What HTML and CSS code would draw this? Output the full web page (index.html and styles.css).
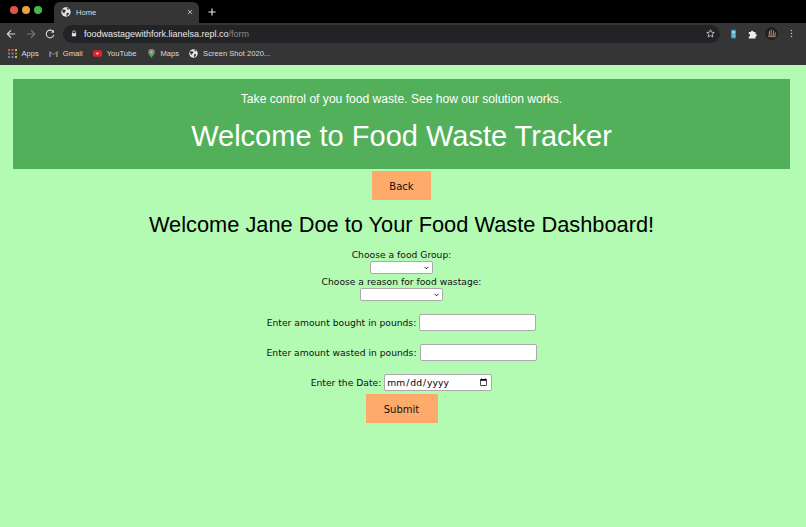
FILE: index.html
```html
<!DOCTYPE html>
<html lang="en">
<head>
  <meta charset="UTF-8" />
  <title>Home</title>
  <link rel="stylesheet" href="styles.css">
</head>
<body>
  <div class="chrome">
    <div class="tabstrip">
      <div class="lights">
        <span class="light red"></span>
        <span class="light yellow"></span>
        <span class="light green"></span>
      </div>
      <div class="tab">
        <svg class="globe" viewBox="0 0 16 16"><circle cx="8" cy="8" r="7.5" fill="#e8e8e8"/><path d="M3 3.500l4 1 1 2-2 1.500-1 3-2-2.500-1.500-2zM9.500 9l3.500.5-1.500 3.500-2.500 1.500-.5-3zM9 1.500l3 .5 1 2-2.500.5z" fill="#3a3a3a"/></svg>
        <span class="tab-title">Home</span>
        <svg class="tab-close" viewBox="0 0 10 10"><path d="M1.500 1.500l7 7M8.500 1.500l-7 7" stroke="#d8d8d8" stroke-width="1.300"/></svg>
      </div>
      <svg class="new-tab" viewBox="0 0 10 10"><path d="M5 .5v9M.5 5h9" stroke="#e8e8e8" stroke-width="1.400"/></svg>
    </div>

    <div class="toolbar">
      <svg class="nav" viewBox="0 0 12 12"><path d="M11 6H2M6 1.500L1.500 6 6 10.500" fill="none" stroke="#d6d6d6" stroke-width="1.300"/></svg>
      <svg class="nav" viewBox="0 0 12 12"><path d="M1 6h9M6 1.500L10.500 6 6 10.500" fill="none" stroke="#777" stroke-width="1.300"/></svg>
      <svg class="nav" viewBox="0 0 12 12"><path d="M10 3.500A4.600 4.600 0 1 0 10.600 7" fill="none" stroke="#d6d6d6" stroke-width="1.300"/><path d="M10.800.8v3.600H7.200z" fill="#d6d6d6"/></svg>
      <div class="omnibox">
        <svg class="lock" viewBox="0 0 8 10"><path d="M2 4.500V3a2 2 0 0 1 4 0v1.500" fill="none" stroke="#e0e0e0"/><rect x="1" y="4.500" width="6" height="4.500" fill="#e0e0e0"/></svg>
        <span class="url">foodwastagewithfork.lianelsa.repl.co<span class="url-path">/form</span></span>
        <svg class="star" viewBox="0 0 12 12"><path d="M6 1l1.500 3.300 3.500.4-2.600 2.400.7 3.500L6 8.800l-3.100 1.800.7-3.500L1 4.700l3.500-.4z" fill="none" stroke="#d6d6d6" stroke-width="1.100"/></svg>
      </div>
      <div class="ext-icons">
        <svg class="ext-note" viewBox="0 0 6 11"><rect width="6" height="11" rx="1" fill="#2f8fa8"/><rect x="1" y="2" width="4" height="3" fill="#9fdcec"/><rect x="1" y="6" width="4" height="3.500" fill="#6cc0d6"/></svg>
        <svg class="ext-puzzle" viewBox="0 0 12 12"><path d="M1 3.500h2.500a1.500 1.500 0 0 1 3 0H9V6a1.500 1.500 0 0 1 0 3v2.500H1V9a1.500 1.500 0 0 0 0-3z" fill="#ececec"/></svg>
        <svg class="avatar" viewBox="0 0 13 13"><circle cx="6.500" cy="6.500" r="6.500" fill="#241e1c"/><path d="M4 10l.5-6M6 10l.2-7.500M8 10l.6-6.500M9.800 9.500l.6-4" stroke="#a8948a" stroke-width="1"/><path d="M3.500 9.500h7" stroke="#8a7468" stroke-width="1.500"/></svg>
        <svg class="menu-dots" viewBox="0 0 4 12"><circle cx="2" cy="2" r="1" fill="#ccc"/><circle cx="2" cy="6" r="1" fill="#ccc"/><circle cx="2" cy="10" r="1" fill="#ccc"/></svg>
      </div>
    </div>

    <div class="bookmarks">
      <span class="bookmark">
        <svg class="bm-icon" viewBox="0 0 9 9">
          <g fill="#e25b4a"><rect width="2" height="2"/><rect x="3.500" width="2" height="2"/></g><rect x="7" width="2" height="2" fill="#e9b13c"/>
          <g fill="#4fa05a"><rect y="3.500" width="2" height="2"/><rect x="7" y="3.500" width="2" height="2"/></g><rect x="3.500" y="3.500" width="2" height="2" fill="#e25b4a"/>
          <g fill="#4f86d9"><rect y="7" width="2" height="2"/><rect x="3.500" y="7" width="2" height="2"/></g><rect x="7" y="7" width="2" height="2" fill="#e9b13c"/>
        </svg>
        Apps
      </span>
      <span class="bookmark">
        <svg class="bm-icon" viewBox="0 0 10 8"><path d="M.5 8V1l4.500 3.500L9.500 1v7H8V3.500L5 5.800 2 3.500V8z" fill="#e0574a"/><path d="M.5 1v7H2V3.500z" fill="#5b8fd9"/><path d="M9.500 1v7H8V3.500z" fill="#57a565"/></svg>
        Gmail
      </span>
      <span class="bookmark">
        <svg class="bm-icon" viewBox="0 0 10 7"><rect width="10" height="7" rx="1.600" fill="#e0202a"/><path d="M4 2v3l2.600-1.500z" fill="#fff"/></svg>
        YouTube
      </span>
      <span class="bookmark">
        <svg class="bm-icon" viewBox="0 0 8 11"><path d="M4 0a4 4 0 0 1 4 4c0 2.500-2.500 4-4 7-1.500-3-4-4.500-4-7a4 4 0 0 1 4-4z" fill="#58a765"/><path d="M1 1.300A4 4 0 0 1 4 0l1 2.500L1.500 5.500z" fill="#5b8fd9"/><path d="M4 0a4 4 0 0 1 3.700 2.500L5 3z" fill="#e0574a"/><circle cx="4" cy="4" r="1.300" fill="#f2c94c"/></svg>
        Maps
      </span>
      <span class="bookmark">
        <svg class="bm-icon" viewBox="0 0 16 16"><circle cx="8" cy="8" r="7.500" fill="#e8e8e8"/><path d="M3 3.500l4 1 1 2-2 1.500-1 3-2-2.500-1.500-2zM9.500 9l3.500.5-1.500 3.500-2.500 1.500-.5-3zM9 1.500l3 .5 1 2-2.500.5z" fill="#3a3a3a"/></svg>
        Screen Shot 2020...
      </span>
    </div>
  </div>

  <div class="page">
    <header class="banner">
      <p class="tagline">Take control of you food waste. See how our solution works.</p>
      <h1>Welcome to Food Waste Tracker</h1>
    </header>

    <button class="action back-btn">Back</button>

    <h2>Welcome Jane Doe to Your Food Waste Dashboard!</h2>

    <form class="waste-form">
      <label for="group">Choose a food Group:</label>
      <select id="group" class="group-select"><option></option></select>
      <label for="reason">Choose a reason for food wastage:</label>
      <select id="reason" class="reason-select"><option></option></select>

      <div class="field first-field">
        <label for="bought">Enter amount bought in pounds:</label>
        <input id="bought" type="text">
      </div>
      <div class="field">
        <label for="wasted">Enter amount wasted in pounds:</label>
        <input id="wasted" type="text">
      </div>
      <div class="field">
        <label for="date">Enter the Date:</label>
        <input id="date" type="date">
      </div>
      <button type="button" class="action submit-btn">Submit</button>
    </form>
  </div>
</body>
</html>
```

FILE: styles.css
```css
* {
  box-sizing: border-box;
}
html, body {
  height: 100%;
}
body {
  margin: 0;
  display: flex;
  flex-direction: column;
  overflow: hidden;
  background-color: #b3fab3;
  font-family: "DejaVu Sans", sans-serif;
}

/* browser frame */
.chrome {
  flex: none;
  font-family: "Liberation Sans", Arial, sans-serif;
  color: #d8d8d8;
}
.tabstrip {
  height: 23px;
  display: flex;
  align-items: flex-end;
  background: #000;
}
.lights {
  display: flex;
  gap: 4px;
  padding: 0 0 9px 10px;
  width: 54px;
}
.light {
  width: 8px;
  height: 8px;
  border-radius: 50%;
}
.red { background: #e5534b; }
.yellow { background: #e0a63c; }
.green { background: #3fb950; }
.tab {
  width: 145px;
  height: 21px;
  display: flex;
  align-items: center;
  padding: 0 6px 1px 7px;
  background: #353535;
  border-radius: 6px 6px 0 0;
  font-size: 7.600px;
}
.globe {
  width: 10px;
  height: 10px;
  margin-right: 5px;
}
.tab-title {
  flex: 1;
  color: #dcdcdc;
}
.tab-close {
  width: 6px;
  height: 6px;
}
.new-tab {
  width: 8px;
  height: 8px;
  margin: 0 0 7px 9px;
}
.toolbar {
  height: 21px;
  display: flex;
  align-items: center;
  padding-left: 6px;
  background: #353535;
}
.nav {
  width: 10px;
  height: 10px;
  margin-right: 9.500px;
}
.nav:nth-child(3) {
  margin-right: 8px;
}
.omnibox {
  width: 657px;
  height: 18px;
  display: flex;
  align-items: center;
  padding: 0 5px 0 8px;
  background: #222326;
  border-radius: 9px;
  font-size: 9px;
}
.lock {
  width: 6px;
  height: 7px;
  margin-right: 7px;
}
.url {
  flex: 1;
  color: #e8e8e8;
}
.url-path {
  color: #8a8a8a;
}
.star {
  width: 9px;
  height: 9px;
}
.ext-icons {
  display: flex;
  align-items: center;
  margin-left: 11px;
}
.ext-note {
  width: 5px;
  height: 10px;
  margin-right: 12px;
}
.ext-puzzle {
  width: 10px;
  height: 10px;
  margin-right: 7px;
}
.avatar {
  width: 13px;
  height: 13px;
  margin-right: 12px;
}
.menu-dots {
  width: 3px;
  height: 9px;
}
.bookmarks {
  height: 21px;
  display: flex;
  align-items: center;
  padding: 0 0 3px 7.500px;
  background: #353535;
  font-size: 7.600px;
}
.bookmark {
  display: flex;
  align-items: center;
  margin-right: 10px;
  color: #dcdcdc;
}
.bm-icon {
  width: 9px;
  height: 9px;
  margin-right: 5px;
}

/* page */
.page {
  flex: 1;
  display: flex;
  flex-direction: column;
  align-items: center;
  padding: 14px 16px 0 13px;
  background-color: #b3fab3;
}
.banner {
  align-self: stretch;
  height: 90px;
  padding-top: 13px;
  background-color: #52b05a;
  color: #fff;
  text-align: center;
  font-family: "Liberation Sans", Arial, sans-serif;
}
.tagline {
  margin: 0;
  font-size: 12.100px;
  line-height: 14px;
}
.banner h1 {
  margin: 12px 0 0;
  font-size: 29px;
  font-weight: normal;
  line-height: 36px;
}
.action {
  border: none;
  padding: 1px 0 0;
  background-color: #fdaa6b;
  color: #111;
  font-family: "DejaVu Sans", sans-serif;
  font-size: 10px;
  cursor: pointer;
}
.back-btn {
  width: 59px;
  height: 29px;
  margin-top: 2px;
}
h2 {
  margin: 11px 0 0;
  font-family: "Liberation Sans", Arial, sans-serif;
  font-size: 21.800px;
  font-weight: normal;
  line-height: 28px;
  color: #000;
}
.waste-form {
  display: flex;
  flex-direction: column;
  align-items: center;
  margin-top: 8px;
  font-size: 9.200px;
  color: #111;
}
label {
  line-height: 13px;
}
.waste-form > label {
  margin-top: 1px;
}
select {
  display: block;
  height: 13px;
  appearance: none;
  background: #fff url("data:image/svg+xml,%3Csvg xmlns='http://www.w3.org/2000/svg' viewBox='0 0 6 4'%3E%3Cpath d='M.7.7L3 3l2.300-2.300' fill='none' stroke='%23222' stroke-width='1.200'/%3E%3C/svg%3E") no-repeat right 3px center / 5px 4px;
  border: 1px solid #aaa;
  border-radius: 2px;
}
.group-select {
  width: 63px;
}
.reason-select {
  width: 83px;
}
.field {
  display: flex;
  align-items: center;
  gap: 3px;
  margin-top: 13px;
}
.field input {
  height: 17px;
  padding: 0 1px;
  background: #fff;
  border: 1px solid #aaa;
  border-radius: 2px;
  font-family: "DejaVu Sans", sans-serif;
  font-size: 9.200px;
}
.field input[type="text"] {
  width: 117px;
}
.field input[type="date"] {
  width: 108px;
}
.submit-btn {
  width: 72px;
  height: 29px;
  margin-top: 3px;
}
```
